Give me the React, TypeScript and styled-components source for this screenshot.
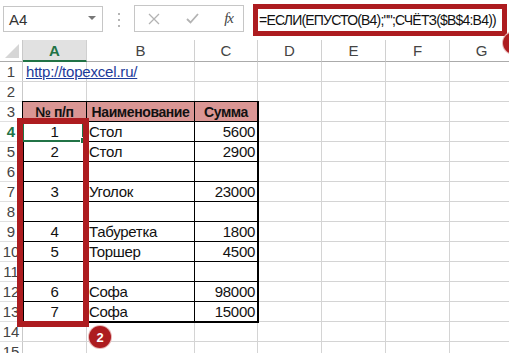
import React from 'react';
import styled, { createGlobalStyle } from 'styled-components';

const GlobalStyle = createGlobalStyle`
  html, body {
    margin: 0;
    padding: 0;
    background: #ffffff;
    overflow: hidden;
  }
  body {
    width: 509px;
    height: 353px;
    font-family: 'Liberation Sans', Arial, sans-serif;
  }
`;

const RED = '#ad1c20';
const GREEN = '#217346';

// Top bar
const Page = styled.div`
  position: relative;
  width: 509px;
  height: 353px;
  overflow: hidden;
`;

const TopBar = styled.div`
  display: flex;
  align-items: flex-start;
  height: 40px;
  padding-top: 4px;
  box-sizing: border-box;
`;

const NameBox = styled.div`
  margin: 2px 0 0 3px;
  width: 100px;
  height: 26px;
  box-sizing: border-box;
  border: 1px solid #c6c6c6;
  display: flex;
  align-items: center;
  justify-content: space-between;
  padding: 0 6px 0 5px;
  font-size: 15px;
  color: #333;
`;

const DropArrow = styled.span`
  width: 0;
  height: 0;
  border-left: 4px solid transparent;
  border-right: 4px solid transparent;
  border-top: 4px solid #777;
  margin-bottom: 3px;
`;

const Dots = styled.div`
  margin: 9px 0 0 14px;
  width: 4px;
  display: flex;
  flex-direction: column;
  align-items: center;
  gap: 4px;
  span {
    width: 2px;
    height: 2px;
    background: #b5b5b5;
  }
`;

const FuncButtons = styled.div`
  margin: 1px 0 0 13px;
  width: 110px;
  height: 27px;
  box-sizing: border-box;
  border: 1px solid #c6c6c6;
  display: flex;
  align-items: center;
  justify-content: space-between;
  padding: 0 10px 0 13px;
`;

const Fx = styled.span`
  font-family: 'Liberation Serif', 'Times New Roman', serif;
  font-style: italic;
  font-size: 15px;
  color: #444;
  letter-spacing: -1px;
`;

const FormulaBar = styled.div`
  margin-left: 9px;
  width: 254px;
  height: 32px;
  box-sizing: border-box;
  border: 5px solid ${RED};
  display: flex;
  align-items: center;
  padding-left: 1px;
  font-size: 14px;
  letter-spacing: -0.8px;
  color: #111;
  white-space: nowrap;
`;

// Sheet
const Sheet = styled.div`
  position: relative;
  display: grid;
  grid-template-columns: 23px 64px 108px 63px 64px 64px 64px 64px;
  grid-template-rows: 22px repeat(15, 20px);
  width: 514px;
`;

const Corner = styled.div`
  border-right: 1px solid #c9c9c9;
  border-bottom: 1px solid #ababab;
  box-sizing: border-box;
  position: relative;
  &::after {
    content: '';
    position: absolute;
    right: 3px;
    bottom: 3px;
    width: 0;
    height: 0;
    border-left: 14px solid transparent;
    border-bottom: 14px solid #d6d6d6;
  }
`;

const ColHeader = styled.div<{ $active?: boolean }>`
  box-sizing: border-box;
  display: flex;
  align-items: center;
  justify-content: center;
  font-size: 15px;
  color: ${p => (p.$active ? GREEN : '#444')};
  font-weight: ${p => (p.$active ? 'bold' : 'normal')};
  background: ${p => (p.$active ? '#e1e1e1' : '#ffffff')};
  border-right: 1px solid #d0d0d0;
  border-bottom: ${p => (p.$active ? `2px solid ${GREEN}` : '1px solid #ababab')};
`;

const RowHeader = styled.div<{ $active?: boolean }>`
  box-sizing: border-box;
  display: flex;
  align-items: center;
  justify-content: center;
  font-size: 15px;
  color: ${p => (p.$active ? GREEN : '#444')};
  font-weight: ${p => (p.$active ? 'bold' : 'normal')};
  border-right: 1px solid #c9c9c9;
  border-bottom: 1px solid #e0e0e0;
`;

const Cell = styled.div`
  box-sizing: border-box;
  border-right: 1px solid #d4d4d4;
  border-bottom: 1px solid #d4d4d4;
  display: flex;
  align-items: center;
  padding: 0 3px;
  font-size: 15px;
  white-space: nowrap;
  overflow: visible;
`;

const Link = styled.span`
  color: #1c3b9a;
  text-decoration: underline;
  letter-spacing: -0.2px;
`;

const Table = styled.div`
  grid-column: 2 / span 3;
  grid-row: 4 / span 11;
  display: grid;
  grid-template-columns: 64px 108px 63px;
  grid-template-rows: repeat(11, 20px);
  outline: 2px solid #000;
  outline-offset: -1px;
  z-index: 1;
  background: #fff;
`;

type Align = 'left' | 'center' | 'right';

const TCell = styled.div<{ $align: Align; $head?: boolean; $selected?: boolean }>`
  position: relative;
  box-sizing: border-box;
  border-right: 1px solid #000;
  border-bottom: 1px solid #000;
  display: flex;
  align-items: center;
  justify-content: ${p => (p.$align === 'left' ? 'flex-start' : p.$align === 'right' ? 'flex-end' : 'center')};
  padding: 0 2px;
  font-size: ${p => (p.$head ? '14px' : '15px')};
  font-weight: ${p => (p.$head ? 'bold' : 'normal')};
  letter-spacing: ${p => (p.$head ? '-0.4px' : '-0.3px')};
  background: ${p => (p.$head ? '#da9694' : 'transparent')};
  color: #111;
  white-space: nowrap;
`;

const Selection = styled.div`
  position: absolute;
  left: -1px;
  right: 2px;
  top: -1px;
  bottom: -1px;
  border: 2px solid ${GREEN};
  pointer-events: none;
  &::after {
    content: '';
    position: absolute;
    right: -5px;
    bottom: -4px;
    width: 5px;
    height: 5px;
    background: ${GREEN};
    border: 1px solid #fff;
  }
`;

// Annotations
const HighlightBox = styled.div`
  position: absolute;
  left: 17px;
  top: 78px;
  width: 72px;
  height: 209px;
  box-sizing: border-box;
  border: 6px solid ${RED};
  z-index: 2;
`;

const Badge = styled.div<{ $left: number; $top: number }>`
  position: absolute;
  left: ${p => p.$left}px;
  top: ${p => p.$top}px;
  width: 22px;
  height: 22px;
  border-radius: 50%;
  background: ${RED};
  box-shadow: 0 0 0 1px #e7b8b8;
  color: #fff;
  font-weight: bold;
  font-size: 13px;
  display: flex;
  align-items: center;
  justify-content: center;
  z-index: 3;
`;

const columns = ['A', 'B', 'C', 'D', 'E', 'F', 'G'];

type Row = [string, string, string];

const tableRows: Row[] = [
  ['№ п/п', 'Наименование', 'Сумма'],
  ['1', 'Стол', '5600'],
  ['2', 'Стол', '2900'],
  ['', '', ''],
  ['3', 'Уголок', '23000'],
  ['', '', ''],
  ['4', 'Табуретка', '1800'],
  ['5', 'Торшер', '4500'],
  ['', '', ''],
  ['6', 'Софа', '98000'],
  ['7', 'Софа', '15000']
];

const aligns: Align[] = ['center', 'left', 'right'];

const XIcon = () => (
  <svg width="12" height="12" viewBox="0 0 12 12">
    <path d="M1 1 L11 11 M11 1 L1 11" stroke="#b3b3b3" strokeWidth="1.3" fill="none" />
  </svg>
);

const CheckIcon = () => (
  <svg width="13" height="11" viewBox="0 0 13 11">
    <path d="M1 6 L4.5 9.5 L12 1" stroke="#b3b3b3" strokeWidth="1.8" fill="none" />
  </svg>
);

export default function App() {
  const rowNumbers = Array.from({ length: 15 }, (_, i) => i + 1);

  return (
    <Page>
      <GlobalStyle />
      <TopBar>
        <NameBox>
          A4
          <DropArrow />
        </NameBox>
        <Dots>
          <span />
          <span />
          <span />
        </Dots>
        <FuncButtons>
          <XIcon />
          <CheckIcon />
          <Fx>fx</Fx>
        </FuncButtons>
        <FormulaBar>=ЕСЛИ(ЕПУСТО(B4);"";СЧЁТЗ($B$4:B4))</FormulaBar>
      </TopBar>
      <Badge $left={503} $top={32}>1</Badge>

      <Sheet>
        <Corner />
        {columns.map(c => (
          <ColHeader key={c} $active={c === 'A'}>
            {c}
          </ColHeader>
        ))}
        {rowNumbers.map(n => {
          const inTable = n >= 3 && n <= 13;
          const cols = inTable ? columns.slice(3) : columns;
          return (
            <React.Fragment key={n}>
              <RowHeader $active={n === 4}>{n}</RowHeader>
              {cols.map(c => (
                <Cell key={c}>{n === 1 && c === 'A' ? <Link>http://topexcel.ru/</Link> : null}</Cell>
              ))}
            </React.Fragment>
          );
        })}
        <Table>
          {tableRows.map((row, r) =>
            row.map((value, c) => (
              <TCell key={`${r}-${c}`} $align={r === 0 ? 'center' : aligns[c]} $head={r === 0}>
                {value}
                {r === 1 && c === 0 && <Selection />}
              </TCell>
            ))
          )}
        </Table>
        <HighlightBox />
        <Badge $left={89} $top={286}>2</Badge>
      </Sheet>
    </Page>
  );
}
